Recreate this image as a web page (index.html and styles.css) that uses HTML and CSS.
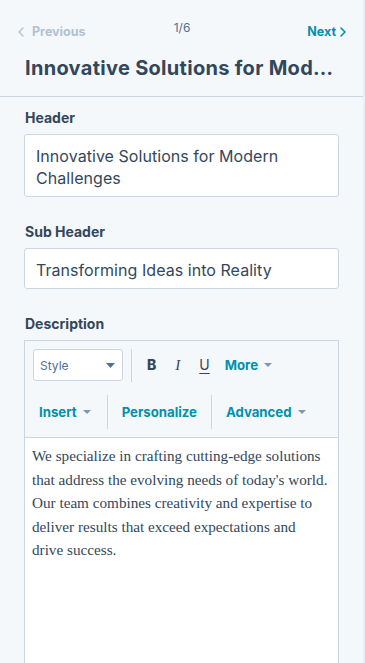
FILE: index.html
```html
<!DOCTYPE html>
<html lang="en">
<head>
<meta charset="utf-8">
<title>Editor</title>
<link rel="stylesheet" href="styles.css">
</head>
<body>
<div class="panel">
  <div class="nav">
    <span class="nav-prev">
      <svg class="chev" width="6" height="10" viewBox="0 0 6 10"><path d="M5 1 L1 5 L5 9" fill="none" stroke="currentColor" stroke-width="1.4" stroke-linecap="round" stroke-linejoin="round"/></svg>
      Previous
    </span>
    <span class="nav-count">1/6</span>
    <span class="nav-next">
      Next
      <svg class="chev" width="6" height="10" viewBox="0 0 6 10"><path d="M1 1 L5 5 L1 9" fill="none" stroke="currentColor" stroke-width="1.6" stroke-linecap="round" stroke-linejoin="round"/></svg>
    </span>
  </div>
  <h1 class="title">Innovative Solutions for Modern Challenges</h1>
  <div class="form">
    <div class="field">
      <label class="label">Header</label>
      <div class="input">Innovative Solutions for Modern Challenges</div>
    </div>
    <div class="field">
      <label class="label">Sub Header</label>
      <div class="input">Transforming Ideas into Reality</div>
    </div>
    <div class="field">
      <label class="label">Description</label>
      <div class="editor">
        <div class="toolbar">
          <div class="row row1">
            <div class="select">
              <span>Style</span>
              <svg width="9" height="5" viewBox="0 0 9 5"><path d="M0 0 H9 L4.5 5 Z" fill="#516f90"/></svg>
            </div>
            <span class="sep"></span>
            <span class="fmt fmt-b">B</span>
            <span class="fmt fmt-i">I</span>
            <span class="fmt fmt-u">U</span>
            <span class="tbtn more">More <svg class="caret" width="8" height="4" viewBox="0 0 8 4"><path d="M0 0 H8 L4 4 Z"/></svg></span>
          </div>
          <div class="row row2">
            <span class="tbtn ins">Insert <svg class="caret" width="8" height="4" viewBox="0 0 8 4"><path d="M0 0 H8 L4 4 Z"/></svg></span>
            <span class="sep tall"></span>
            <span class="tbtn pers">Personalize</span>
            <span class="sep tall"></span>
            <span class="tbtn adv">Advanced <svg class="caret" width="8" height="4" viewBox="0 0 8 4"><path d="M0 0 H8 L4 4 Z"/></svg></span>
          </div>
        </div>
        <div class="content">
          We specialize in crafting cutting-edge solutions that address the evolving needs of today's world. Our team combines creativity and expertise to deliver results that exceed expectations and drive success.
        </div>
      </div>
    </div>
  </div>
</div>
</body>
</html>
```
FILE: styles.css
```css
* { box-sizing: border-box; }
html, body { margin: 0; padding: 0; }
body {
  background: #eaf0f6;
  font-family: "Inter", "Open Sans", sans-serif;
  color: #33475b;
  height: 663px;
  overflow: hidden;
}
.panel {
  width: 363px;
  height: 663px;
  background: #f5f8fa;
  overflow: hidden;
}
.nav {
  display: grid;
  grid-template-columns: 1fr auto 1fr;
  align-items: start;
  padding: 21px 17px 0 16px;
  height: 44px;
}
.nav-prev, .nav-next {
  display: flex;
  align-items: center;
  gap: 8px;
  font-size: 12.5px;
  font-weight: 700;
  line-height: 22px;
}
.nav-prev { color: #b0c1d4; }
.nav-prev .chev { margin-left: 2px; }
.nav-next { color: #0091ae; gap: 4px; justify-self: end; }
.nav-count {
  font-size: 12px;
  color: #516f90;
  line-height: 14px;
  padding-left: 2px;
}
.title {
  margin: 0;
  padding: 9px 22px 0 25px;
  font-size: 20px;
  letter-spacing: 0.3px;
  font-weight: 700;
  line-height: 30px;
  height: 53px;
  white-space: nowrap;
  overflow: hidden;
  text-overflow: ellipsis;
  border-bottom: 1px solid #cbd6e2;
}
.form {
  padding: 11px 24px 0 24px;
}
.field { margin-bottom: 25px; }
.label {
  display: block;
  font-size: 14px;
  font-weight: 700;
  line-height: 20px;
  margin-bottom: 6px;
  padding-left: 1px;
}
.input {
  background: #fff;
  border: 1px solid #cbd6e2;
  border-radius: 3px;
  padding: 10px 11px 7px 11px;
  font-size: 16px;
  letter-spacing: 0.05px;
  line-height: 22px;
  color: #33475b;
}
.editor {
  border: 1px solid #cbd6e2;
  height: 400px;
  background: #fff;
}
.toolbar {
  background: #f5f8fa;
  border-bottom: 1px solid #cbd6e2;
  padding: 7px 0 8px 0;
}
.row { display: flex; align-items: center; }
.row1 { height: 34px; padding-left: 8px; }
.row2 { height: 34px; margin-top: 13px; }
.select {
  width: 90px;
  height: 32px;
  background: #fff;
  border: 1px solid #cbd6e2;
  border-radius: 3px;
  display: flex;
  align-items: center;
  justify-content: space-between;
  padding: 0 7px 0 6px;
  font-size: 12px;
  color: #516f90;
}
.sep {
  display: block;
  width: 1px;
  height: 33px;
  background: #cbd6e2;
  margin-left: 8px;
}
.sep.tall { height: 34px; margin-left: 0; }
.fmt {
  font-size: 14px;
  color: #33475b;
  line-height: 20px;
}
.fmt-b { font-weight: 800; margin-left: 15px; }
.fmt-i { font-family: "Liberation Serif", serif; font-style: italic; font-size: 15px; margin-left: 19px; }
.fmt-u { text-decoration: underline; text-underline-offset: 3px; margin-left: 19px; }
.tbtn {
  display: flex;
  align-items: center;
  gap: 6px;
  font-size: 13.2px;
  font-weight: 700;
  color: #0091ae;
  line-height: 20px;
}
.caret { fill: #7c98b6; }
.more { margin-left: 15px; }
.ins { padding: 0 16px 0 14px; }
.pers { padding: 0 14px; }
.adv { padding: 0 14px; }
.content {
  padding: 6px 9px 0 7px;
  font-family: "Liberation Serif", serif;
  font-size: 15.2px;
  line-height: 23.5px;
  color: #33475b;
}
```
